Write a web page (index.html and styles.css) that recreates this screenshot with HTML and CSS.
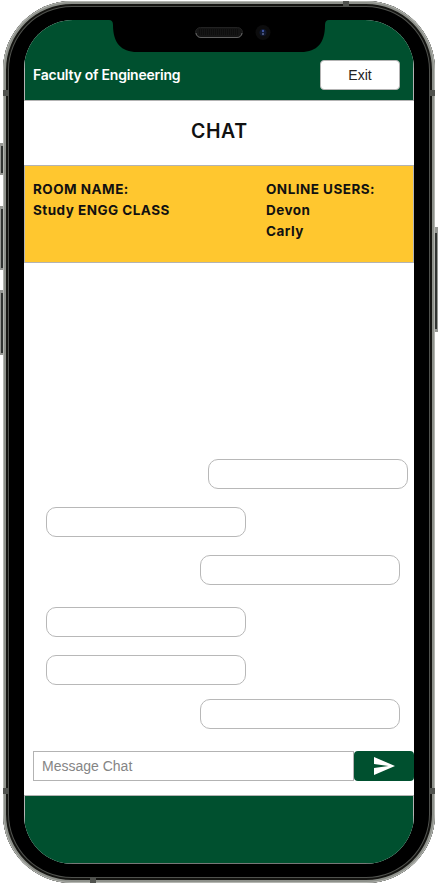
FILE: index.html
```html
<!DOCTYPE html>
<html lang="en">
<head>
<meta charset="utf-8">
<title>Chat</title>
<link rel="stylesheet" href="styles.css">
</head>
<body>
<div class="device">
  <i class="seam seam-top-left"></i><i class="seam seam-top"></i><i class="seam seam-right-top"></i>
  <i class="seam seam-left"></i><i class="seam seam-right"></i><i class="seam seam-bottom"></i>
  <i class="key key-mute"></i><i class="key key-up"></i><i class="key key-down"></i><i class="key key-power"></i>
  <main class="screen">
    <header class="topbar">
      <span class="brand">Faculty of Engineering</span>
      <button class="exit">Exit</button>
    </header>
    <h1 class="title"><span>CHAT</span></h1>
    <section class="room">
      <div class="room-name"><span class="room-label">ROOM NAME:</span><br><span class="room-value">Study ENGG CLASS</span></div>
      <div class="users"><span class="users-label">ONLINE USERS:</span><br><span class="user">Devon</span><br><span class="user">Carly</span></div>
    </section>
    <section class="messages">
      <div class="bubble sent first"></div>
      <div class="bubble"></div>
      <div class="bubble sent"></div>
      <div class="bubble later"></div>
      <div class="bubble"></div>
      <div class="bubble sent last"></div>
    </section>
    <form class="composer">
      <div class="field"><span>Message Chat</span></div>
      <button class="send" type="button" aria-label="Send">
        <svg width="21" height="18" viewBox="0 0 21 18"><path fill="#fff" d="M0 0 21 9 0 18V11L14.5 9 0 7Z"/></svg>
      </button>
    </form>
    <footer class="footer"></footer>
  </main>
  <svg class="notch" width="220" height="34" viewBox="0 0 220 34">
    <path d="M0 0V1Q4 1 4 6C4 24 12 33 28 33H192C208 33 216 24 216 6Q216 1 220 1V0Z"/>
    <rect x="86.5" y="8.5" width="47" height="10" rx="5" fill="#151515" stroke="#222"/>
    <path d="M87 14Q88 18.500 92 18.500H128Q132 18.500 133 14" fill="none" stroke="#626262"/>
    <path d="M90 11H130M90 13H130M90 15H130" stroke="#080808" stroke-dasharray="1 1"/>
    <circle cx="154" cy="13.500" r="7.500" fill="#0c0c0d"/>
    <circle cx="154" cy="13.500" r="3.500" fill="#10182f"/>
    <circle cx="154" cy="12" r="1.200" fill="#3d53a0"/>
    <circle cx="154" cy="15" r="1" fill="#5b6690"/>
  </svg>
</div>
</body>
</html>
```
FILE: styles.css
```css
* { box-sizing: border-box; }
body { margin: 0; background: #fff; overflow: hidden; font-family: Inter, "Liberation Sans", sans-serif; color: #111; }
button { font: inherit; padding: 0; }
.device {
  position: relative;
  width: 432px;
  height: 882px;
  margin: 1px 3px;
  padding: 19px 21px;
  border-radius: 69px;
  background: #000;
  box-shadow: inset 0 0 0 1px #b4b6b1, inset 0 0 0 3px #8e918b, inset 0 0 0 5px #151512, inset 0 0 0 6px #50524e;
}
.screen {
  display: flex;
  flex-direction: column;
  width: 390px;
  height: 844px;
  border-radius: 49px;
  overflow: hidden;
  background: #fff;
}
.topbar {
  flex: none;
  height: 81px;
  display: flex;
  align-items: flex-start;
  justify-content: space-between;
  padding: 40px 13px 0 8px;
  background: #00502f;
  border: 1px solid #b3b3b3;
  border-top: 0;
}
.brand { font-size: 14px; line-height: 30px; font-weight: 600; color: #fff; letter-spacing: -.23px; }
.exit {
  width: 80px;
  height: 30px;
  border: 1px solid #b3b3b3;
  border-radius: 4px;
  background: #fff;
  color: #222;
  font: 14px/28px "Liberation Sans", sans-serif;
}
.title { flex: none; height: 64px; margin: 0; font-size: 19.5px; line-height: 61px; font-weight: 600; letter-spacing: .6px; text-indent: .6px; text-align: center; }
.room {
  flex: none;
  height: 98px;
  display: flex;
  padding: 12.5px 8px;
  background: #ffc72f;
  border: 1px solid #b3b3b3;
  font-size: 13.5px;
  line-height: 21px;
  font-weight: 700;
  letter-spacing: .47px;
}
.room-name { width: 233px; }
.messages { flex: 1; display: flex; flex-direction: column; padding: 196px 14px 0 22px; }
.bubble { flex: none; width: 200px; height: 30px; margin-bottom: 18px; border: 1px solid #b8b8b8; border-radius: 10px; }
.sent { align-self: flex-end; }
.first { margin-right: -8px; }
.later { margin-top: 4px; }
.last { margin-top: -4px; }
.composer { flex: none; height: 30px; display: flex; margin: 0 0 14px 9px; }
.field { flex: 1; padding-left: 8px; border: 1px solid #b3b3b3; font: 14px/28px "Liberation Sans", sans-serif; color: #858585; }
.send { width: 60px; border: 0; border-radius: 4px; background: #00502f; display: flex; align-items: center; justify-content: center; }
.footer { flex: none; height: 69px; background: #00502f; border: 1px solid #b3b3b3; border-bottom-color: #777; }
.notch { position: absolute; left: 106px; top: 18px; }
.seam { position: absolute; background: #50524e; }
.seam-top-left { left: 0; top: 89px; width: 5px; height: 6px; }
.seam-top { left: 340px; top: 0; width: 6px; height: 5px; }
.seam-right-top { right: 0; top: 89px; width: 5px; height: 6px; }
.seam-left { left: 0; top: 787px; width: 5px; height: 6px; }
.seam-right { right: 0; top: 787px; width: 5px; height: 6px; }
.seam-bottom { left: 87px; bottom: 0; width: 6px; height: 5px; }
.key { position: absolute; left: -3px; width: 3px; background: #303331; border: solid #969894; border-width: 3px 0 2px 1px; }
.key-mute { top: 142px; height: 32px; }
.key-up { top: 205px; height: 64px; }
.key-down { top: 289px; height: 65px; }
.key-power { left: auto; right: -3px; top: 226px; height: 105px; border-width: 6px 1px 3px 0; }
```
